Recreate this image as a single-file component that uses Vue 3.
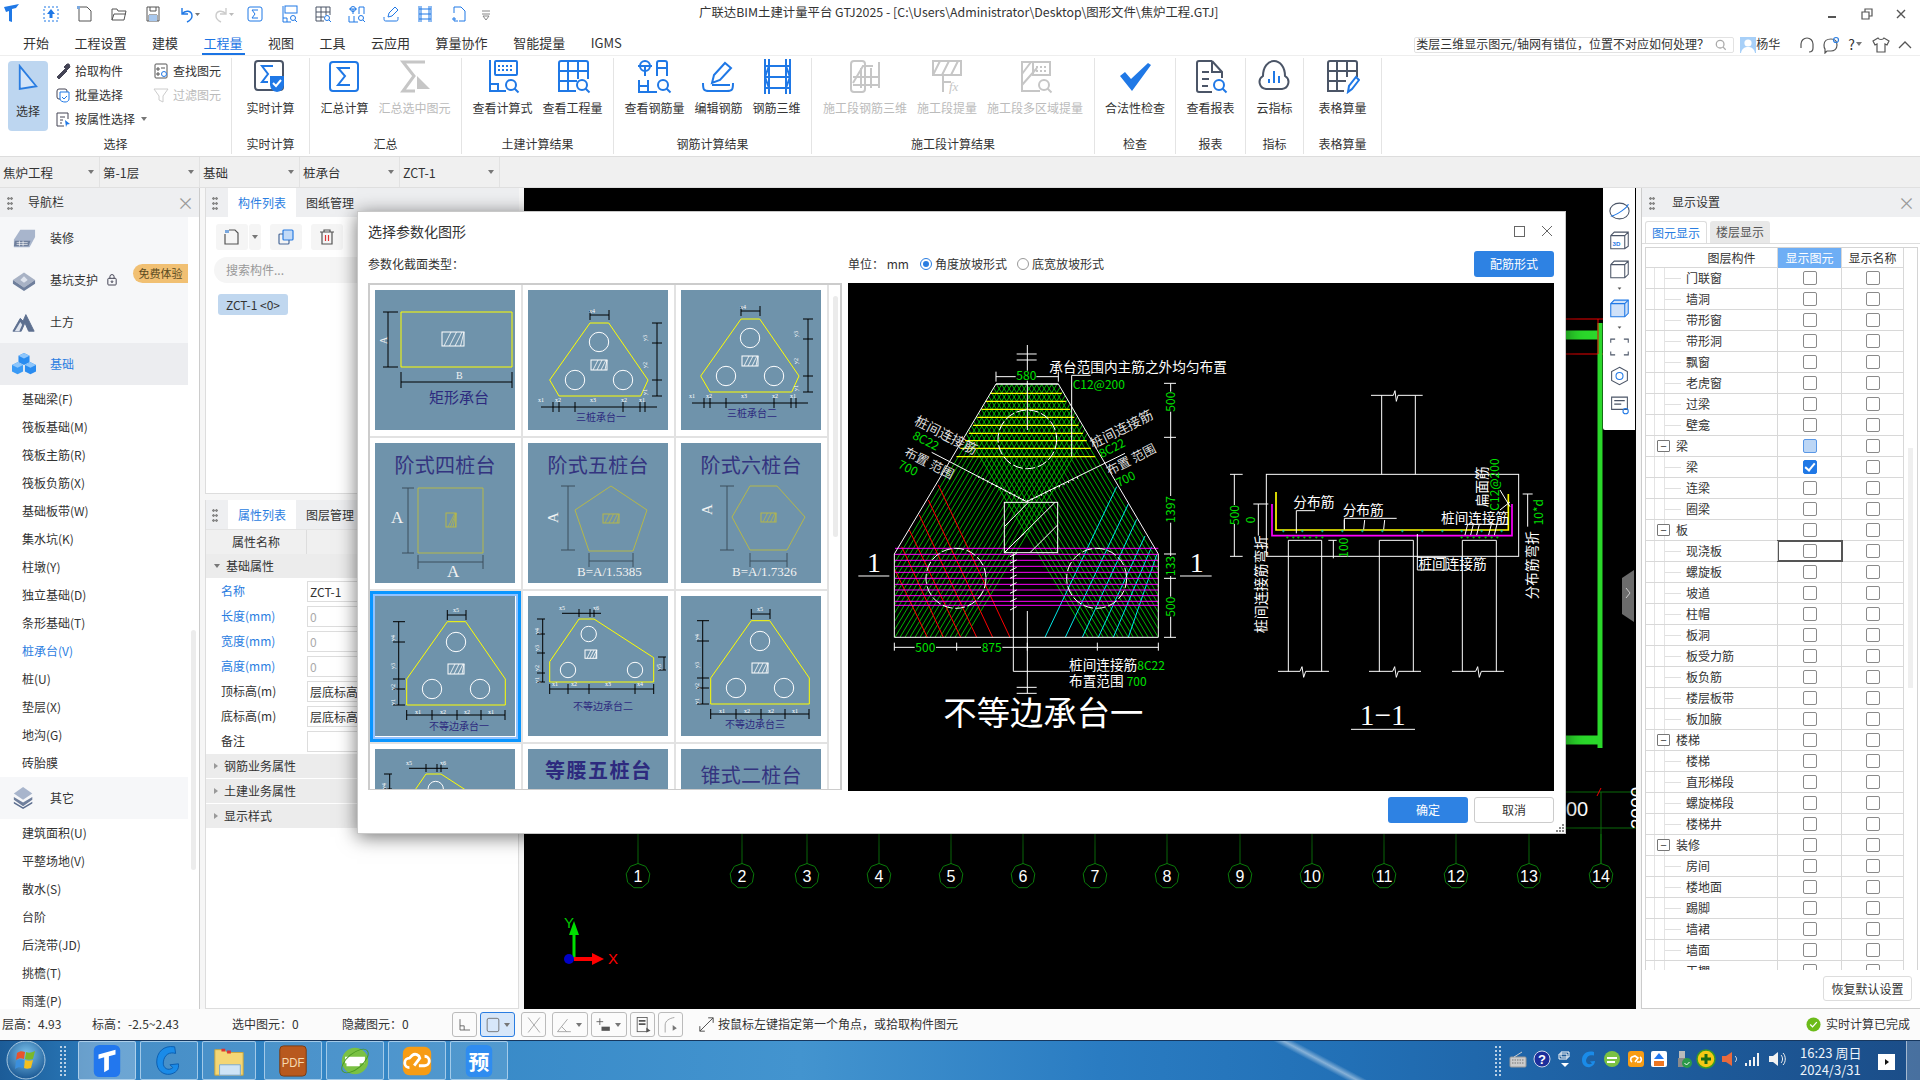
<template>
  <div class="app">
    <div class="titlebar">
      <svg class="logo" viewBox="0 0 20 20"><path d="M1 3l15-3-3 4-4 1v13l-3-1V7L3 8z" fill="#1f78e6"/></svg>
      <div class="quick">
        <svg v-for="q in quick" :key="q" viewBox="0 0 18 18" class="qk" v-html="qicons[q]"></svg>
      </div>
      <div class="apptitle">广联达BIM土建计量平台 GTJ2025 - [C:\Users\Administrator\Desktop\图形文件\焦炉工程.GTJ]</div>
      <div class="winbtns">
        <svg viewBox="0 0 12 12"><path d="M1 9h8" stroke="#555" stroke-width="2"/></svg>
        <svg viewBox="0 0 12 12" fill="none" stroke="#555" stroke-width="1.2"><path d="M1 4h7v7H1zM4 4V1h7v7H8"/></svg>
        <svg viewBox="0 0 12 12" stroke="#555" stroke-width="1.4"><path d="M2 2l8 8M10 2l-8 8"/></svg>
      </div>
    </div>

    <div class="menubar">
      <span v-for="m in menus" :key="m" class="menu" :class="{ on: m === '工程量' }">{{ m }}</span>
      <div class="menuright">
        <div class="helpsearch">
          <span class="helptext">类层三维显示图元/轴网有错位，位置不对应如何处理？</span>
          <svg viewBox="0 0 14 14" width="12" height="12" fill="none" stroke="#aaa" stroke-width="1.5"><circle cx="6" cy="6" r="4.5"/><path d="M9.5 9.5l3 3"/></svg>
        </div>
        <svg class="avatar" viewBox="0 0 16 16"><rect width="16" height="16" fill="#a8d0f8"/><circle cx="8" cy="6" r="3.6" fill="#fff"/><path d="M1 16c1-5 4-6 7-6s6 1 7 6z" fill="#fff"/></svg>
        <span class="uname">杨华</span>
        <svg class="hico" viewBox="0 0 18 18" fill="none" stroke="#555" stroke-width="1.2"><path d="M3 10V8a6 6 0 0 1 12 0v2M3 8v4M15 8v4c0 3-2 4-4 4"/></svg>
        <svg class="hico" viewBox="0 0 18 18" fill="none" stroke="#555" stroke-width="1.2"><path d="M2 9c0-4 3-6 7-6s6 2 6 6-3 6-6 6H5l-2 2v-4c-1-1-1-2-1-4z"/><circle cx="14" cy="4" r="2.5" stroke="#2a7de1"/></svg>
        <span class="qmark">?<i class="tri"></i></span>
        <svg class="hico shirt" viewBox="0 0 18 18" fill="none" stroke="#555" stroke-width="1.2"><path d="M6 2L1 5l2 4 2-1v8h8V8l2 1 2-4-5-3c-1 2-5 2-6 0z"/></svg>
        <svg class="hico" viewBox="0 0 18 18" fill="none" stroke="#555" stroke-width="1.3"><path d="M3 12l6-6 6 6"/></svg>
      </div>
    </div>

    <div class="ribbon">
      <div class="group selgrp">
        <div class="grouprow">
          <div class="selbtn">
            <svg viewBox="0 0 24 30" width="22" height="28"><path d="M3 2l18 22-18 3z" fill="#d4e5f8" stroke="#2a7de1" stroke-width="2"/></svg>
            <span>选择</span>
          </div>
          <div class="selcol">
            <div class="small"><svg viewBox="0 0 16 16" v-html="qicons.picker"></svg>拾取构件</div>
            <div class="small"><svg viewBox="0 0 16 16" v-html="qicons.batch"></svg>批量选择</div>
            <div class="small"><svg viewBox="0 0 16 16" v-html="qicons.attr"></svg>按属性选择<i class="tri"></i></div>
          </div>
          <div class="selcol second">
            <div class="small"><svg viewBox="0 0 16 16" v-html="qicons.find"></svg>查找图元</div>
            <div class="small off"><svg viewBox="0 0 16 16" v-html="qicons.filter"></svg>过滤图元</div>
          </div>
        </div>
        <div class="glabel">选择</div>
      </div>
      <div v-for="g in groups" :key="g.name" class="group" :style="{ width: g.w + 'px' }">
        <div class="grouprow btnrow">
          <div v-for="b in g.items" :key="b.t" class="rbtn" :class="{ off: b.off }">
            <svg viewBox="0 0 36 36" v-html="icons[b.i]"></svg>
            <span>{{ b.t }}</span>
          </div>
        </div>
        <div class="glabel">{{ g.name }}</div>
      </div>
    </div>

    <div class="combos">
      <div v-for="c in combos" :key="c" class="combo">{{ c }}<i class="tri"></i></div>
    </div>

    <div class="main">
      <div class="nav">
        <div class="phead"><i class="grip"></i><span>导航栏</span><em class="x">×</em></div>
        <div class="navlist">
          <div class="sec"><svg viewBox="0 0 26 24" v-html="navicons.deco"></svg><span>装修</span></div>
          <div class="sec"><svg viewBox="0 0 26 24" v-html="navicons.pit"></svg><span>基坑支护</span>
            <svg class="lock" viewBox="0 0 12 14" fill="none" stroke="#445" stroke-width="1.2"><rect x="1" y="5" width="10" height="8" rx="1"/><path d="M3.5 5V3a2.5 2.5 0 0 1 5 0v2"/><circle cx="6" cy="9" r="1"/></svg>
            <b class="free">免费体验</b></div>
          <div class="sec"><svg viewBox="0 0 26 24" v-html="navicons.earth"></svg><span>土方</span></div>
          <div class="sec act"><svg viewBox="0 0 26 24" v-html="navicons.base"></svg><span>基础</span></div>
          <div v-for="n in navBase" :key="n" class="sub" :class="{ cur: n === '桩承台(V)' }">{{ n }}</div>
          <div class="sec"><svg viewBox="0 0 26 24" v-html="navicons.other"></svg><span>其它</span></div>
          <div v-for="n in navOther" :key="n" class="sub">{{ n }}</div>
        </div>
        <i class="navscroll"></i>
      </div>

      <div class="middle">
        <div class="listpanel">
          <div class="phead tabs"><i class="grip"></i><span class="tab on">构件列表</span><span class="tab">图纸管理</span></div>
          <div class="listtools">
            <span class="tbtn"><svg viewBox="0 0 18 18" fill="none" stroke="#555" stroke-width="1.2" v-html="qicons.newdoc"></svg></span><span class="tbtn arrow"><i class="tri"></i></span>
            <span class="tbtn gap"><svg viewBox="0 0 18 18" fill="none" stroke="#4a6a9a" stroke-width="1.2"><rect x="6" y="2" width="10" height="10" rx="1" fill="#c2daf7" stroke="#2a7de1"/><path d="M6 6H3a1 1 0 0 0-1 1v8a1 1 0 0 0 1 1h8a1 1 0 0 0 1-1v-3"/></svg></span>
            <span class="tbtn gap"><svg viewBox="0 0 18 18" fill="none" stroke="#555" stroke-width="1.2"><path d="M2 4h14M6 4V2h6v2M4 4v12h10V4"/><path d="M7.5 7v6M10.5 7v6" stroke="#d33"/></svg></span>
          </div>
          <div class="searchbox">搜索构件...</div>
          <div class="listitem">ZCT-1 &lt;0&gt;</div>
        </div>
        <div class="attrpanel">
          <div class="phead tabs attrtabs"><i class="grip"></i><span class="tab on">属性列表</span><span class="tab">图层管理</span></div>
          <div class="attrhead"><span>属性名称</span></div>
          <div class="attrsec"><i class="tri"></i>基础属性</div>
          <div v-for="a in attrs" :key="a.k" class="attrrow">
            <span class="an" :class="{ blue: a.b }">{{ a.k }}</span>
            <span class="av" :class="{ grey: a.v === '0' }">{{ a.v }}</span>
          </div>
          <div v-for="s in attrSecs" :key="s" class="attrsec closed"><i class="tri side"></i>{{ s }}</div>
        </div>
      </div>

      <div class="canvas">
        <svg class="cadbg" viewBox="0 0 1112 821">
          <g v-for="b in bubbles" :key="b.n">
            <path :d="`M${b.x} 646V676`" stroke="#0a6a0a" stroke-width="1"/>
            <polygon :points="octagon(b.x, 688)" fill="none" stroke="#0a7a0a"/>
            <text :x="b.x" y="694" class="bub">{{ b.n }}</text>
          </g>
          <path d="M1042 604H1112M1042 640H1112M1077 604V676" stroke="#0a6a0a" fill="none"/>
          <path d="M1077 600l-4 8M1042 131H1079M1042 166H1079" stroke="#e00" fill="none"/>
          <path d="M1042 147H1074M1042 552H1076" stroke="#2bd82b" stroke-width="9" fill="none"/>
          <path d="M1076 135V560" stroke="#2bd82b" stroke-width="5"/>
          <path d="M1074 131V166" stroke="#e00"/>
          <text x="1042" y="628" class="big">00</text>
          <text transform="rotate(-90 1120 641)" x="1120" y="641" class="big sm">3000</text>
          <path d="M1098 390l12-8v52l-12-8z" fill="#6b6b6b"/>
          <path d="M1102 400l4 5-4 5" stroke="#ccc" fill="none"/>
          <path d="M50 771V742" stroke="#00e000" stroke-width="3"/>
          <path d="M50 733l-5 14h10z" fill="#00e000"/>
          <path d="M50 771H72" stroke="#f00" stroke-width="4"/>
          <path d="M80 771l-12-6v12z" fill="#f00"/>
          <circle cx="45" cy="771" r="5" fill="#0000c8"/>
          <text x="45" y="740" class="axis" fill="#00c800" text-anchor="middle">Y</text>
          <text x="84" y="776" class="axis" fill="#f00">X</text>
        </svg>
        <div class="vtools">
          <svg v-for="(v, i) in vtools" :key="i" :class="{ small: v === 'down' }" viewBox="0 0 24 24" v-html="vicons[v]"></svg>
        </div>
      </div>

      <div class="rightpanel">
        <div class="phead"><i class="grip"></i><span>显示设置</span><em class="x">×</em></div>
        <div class="rtabs"><span class="rtab on">图元显示</span><span class="rtab">楼层显示</span></div>
        <div class="rtable">
          <div class="rrow rhead"><span class="c1 ch">图层构件</span><span class="c2 hl">显示图元</span><span class="c3">显示名称</span></div>
          <div v-for="(r, i) in layers" :key="i" class="rrow">
            <span class="c1" :class="{ grp: r.g }">
              <i class="tree"></i>
              <b v-if="r.g" class="minus">−</b>
              <i v-else class="dash"></i>
              {{ r.t }}
            </span>
            <span class="c2" :class="{ picked: r.t === '现浇板' }"><i class="cb" :class="{ half: r.half, chk: r.chk }"></i></span>
            <span class="c3"><i class="cb"></i></span>
          </div>
          <i class="rscroll"></i>
        </div>
        <div class="rfoot"><span class="btn">恢复默认设置</span></div>
      </div>
    </div>

    <div class="status">
      <span class="st s1">层高：4.93</span>
      <span class="st s2">标高：-2.5~2.43</span>
      <span class="st s3">选中图元：0</span>
      <span class="st s4">隐藏图元：0</span>
      <div class="stools">
        <span v-for="(t, i) in stools" :key="i" class="stbtn" :class="t.c" :style="{ width: t.w + 'px', marginLeft: t.m + 'px' }">
          <svg viewBox="0 0 24 24" v-html="t.s"></svg><i v-if="t.a" class="tri"></i>
        </span>
      </div>
      <svg class="prompt" viewBox="0 0 18 18" fill="none" stroke="#444" stroke-width="1.1"><path d="M1 17L17 1M11 1h6v6M1 11v6h6"/></svg>
      <span class="prompttext">按鼠标左键指定第一个角点，或拾取构件图元</span>
      <div class="done">
        <svg viewBox="0 0 16 16" width="15" height="15"><circle cx="8" cy="8" r="7.5" fill="#6cbb1a"/><path d="M4.5 8l2.5 2.5 4.5-5" stroke="#fff" fill="none" stroke-width="1.4"/></svg>
        <span>实时计算已完成</span>
      </div>
    </div>

    <div class="taskbar">
      <svg class="orb" viewBox="0 0 40 40">
        <defs><radialGradient id="orbg" cx=".5" cy=".35" r=".7"><stop offset="0" stop-color="#7cc4ee"/><stop offset="1" stop-color="#134f8c"/></radialGradient></defs>
        <circle cx="20" cy="20" r="19" fill="url(#orbg)" stroke="#a9c8e0"/>
        <path d="M11 13c3-2 5-2 8-1l-1 7c-3-1-5-1-8 1z" fill="#e8532d"/><path d="M20 12c3 1 5 1 9-1l-2 8c-3 1-6 1-8 0z" fill="#7ab829"/>
        <path d="M10 21c3-2 5-2 8-1l-1 8c-3-1-5-1-8 1z" fill="#3b8fdc"/><path d="M19 20c3 1 5 1 8 0l-2 8c-3 1-5 1-7 0z" fill="#f4c020"/>
      </svg>
      <i class="tdots left"></i>
      <div class="tbtns">
        <span v-for="(t, i) in taskapps" :key="i" class="task" :class="{ first: i === 0, g3: i === 2 }" v-html="t"></span>
      </div>
      <i class="tdots right"></i>
      <div class="tray">
        <svg v-for="(t, i) in trayicons" :key="i" viewBox="0 0 20 20" v-html="t"></svg>
      </div>
      <div class="clock"><div>16:23 周日</div><div>2024/3/31</div></div>
      <span class="flag"><i></i></span>
      <span class="showdesk"></span>
    </div>

    <!-- 弹窗 -->
    <div class="dialog">
      <div class="dtitle">
        <span>选择参数化图形</span>
        <svg viewBox="0 0 40 14" width="40" height="14" fill="none" stroke="#666"><rect x="1.500" y="2.500" width="10" height="10" stroke-width="1"/><path d="M29 2l10 10M39 2L29 12" stroke-width="1"/></svg>
      </div>
      <div class="dtool">
        <span class="dlabel">参数化截面类型：</span>
        <span class="unit">单位：&nbsp;mm</span>
        <span class="radio on"></span><span class="rlabel">角度放坡形式</span>
        <span class="radio"></span><span class="rlabel">底宽放坡形式</span>
        <span class="pbtn small">配筋形式</span>
      </div>
      <div class="dbody">
        <div class="gridwrap">
          <div class="cells">
            <div v-for="(t, i) in thumbs" :key="i" class="cell" :class="{ sel: t.sel }">
              <svg class="thumb" viewBox="0 0 140 140">
                <text v-if="t.head" x="70" :y="t.hy" class="thead" :class="{ heavy: t.bold }" :textLength="t.bold ? 106 : 101">{{ t.head }}</text>
                <g :transform="`translate(${t.dx || 0} ${t.dy || 0})`">
                  <path v-if="t.dims" :d="t.dims" fill="none" :stroke="t.dimc || '#000'" stroke-width="1"/>
                  <polygon v-if="t.poly" :points="t.poly" fill="none" :stroke="t.yc || '#ffff00'" stroke-width="1"/>
                  <circle v-for="(c, j) in t.circles || []" :key="j" :cx="c[0]" :cy="c[1]" :r="c[2]" fill="none" stroke="#fff"/>
                  <g v-if="t.box">
                    <rect :x="t.box[0]" :y="t.box[1]" :width="t.box[2] - t.box[0]" :height="t.box[3] - t.box[1]" fill="none" :stroke="t.yc || '#fff'"/>
                    <path :d="hatch(t.box)" :stroke="t.yc || '#fff'" stroke-width=".8"/>
                  </g>
                  <text v-for="(l, j) in t.labels || []" :key="j" :x="l[0]" :y="l[1]" class="tiny" :transform="l[3] ? `rotate(-90 ${l[0]} ${l[1]})` : null">{{ l[2] }}</text>
                  <text v-if="t.name" :x="t.name[0]" :y="t.name[1]" :font-size="t.name[3] || 10" class="tname">{{ t.name[2] }}</text>
                  <text v-for="(l, j) in t.big || []" :key="j" :x="l[0]" :y="l[1]" :font-size="l[3] || 13" class="tbig" :transform="l[4] ? `rotate(-90 ${l[0]} ${l[1]})` : null">{{ l[2] }}</text>
                </g>
              </svg>
            </div>
          </div>
          <div class="gsb"><i></i></div>
        </div>
        <svg class="preview" viewBox="0 0 706 508">
          <!-- 平面图 -->
          <g transform="translate(2 -3) scale(.33333)" fill="none" stroke-width="3">
            <clipPath id="cap"><polygon points="438,312 625,312 925,822 925,1072 133,1072 133,822"/></clipPath>
            <g clip-path="url(#cap)">
              <path :d="greenA" stroke="#00d800" stroke-width="2.5"/>
              <path :d="greenB" stroke="#00d800" stroke-width="2.5"/>
            </g>
            <path :d="yellows" stroke="#ffff00" stroke-width="4"/>
            <path d="M265 615L480 1072M235 660L428 1072M208 705L380 1072M178 750L332 1072M155 800L280 1072M135 870L232 1072" stroke="#f00"/>
            <path d="M800 620L585 1072M835 672L646 1072M860 718L697 1072M885 768L745 1072M905 800L790 1072M920 825L835 1072" stroke="#00e8e8"/>
            <path :d="magentas" stroke="#f0f" stroke-width="3"/>
            <circle cx="532" cy="478" r="88" stroke="#fff" stroke-dasharray="30 8"/>
            <circle cx="318" cy="895" r="90" stroke="#fff" stroke-dasharray="30 8"/>
            <circle cx="740" cy="895" r="90" stroke="#fff" stroke-dasharray="30 8"/>
            <polygon points="438,312 625,312 925,822 925,1072 133,1072 133,822" stroke="#fff"/>
            <rect x="463" y="667" width="160" height="151" stroke="#fff"/>
            <path d="M463 740L535 667M463 818L615 667M540 818L623 735M490 790L523 760" stroke="#fff"/>
            <path d="M532 195V450M500 222H560M500 240H560M532 993V1240M500 1222H560M500 1240H560" stroke="#fff"/>
            <path d="M438 290H625M438 275V305M625 275V305M665 530V286H722M625 312H438" stroke="#fff"/>
            <path d="M962 310V1072M942 310H978M942 472H978M942 822H978M942 895H978M942 1072H978" stroke="#fff"/>
            <path d="M133 1102H925M133 1088V1112M320 1088V1112M532 1088V1112M742 1088V1112M925 1088V1112" stroke="#fff"/>
            <path d="M490 820V1174H660" stroke="#fff"/>
            <path d="M480 830L500 820M480 850L500 840M480 872L500 862M480 895L500 885M480 918L500 908M480 940L500 930M480 965L500 955M480 990L500 980" stroke="#fff"/>
            <path d="M245 517L530 665L825 520" stroke="#fff"/>
            <path d="M385 590L530 665L690 590" stroke="#fff" stroke-width="6" stroke-dasharray="3 12"/>
            <path d="M25 888H118M990 888H1085" stroke="#fff"/>
            <g class="cadtext" stroke="none">
              <rect x="497" y="272" width="62" height="30" fill="#000"/>
              <text x="499" y="300" font-size="36" fill="#00e000">580</text>
              <text x="598" y="275" font-size="41" fill="#fff">承台范围内主筋之外均匀布置</text>
              <text x="668" y="327" font-size="36" fill="#00e000">C12@200</text>
              <rect x="945" y="335" width="34" height="60" fill="#000"/>
              <rect x="945" y="648" width="34" height="80" fill="#000"/>
              <rect x="945" y="828" width="34" height="60" fill="#000"/>
              <rect x="945" y="950" width="34" height="60" fill="#000"/>
              <text x="975" y="365" font-size="36" fill="#00e000" text-anchor="middle" transform="rotate(-90 975 365)">500</text>
              <text x="975" y="688" font-size="36" fill="#00e000" text-anchor="middle" transform="rotate(-90 975 688)">1397</text>
              <text x="975" y="858" font-size="36" fill="#00e000" text-anchor="middle" transform="rotate(-90 975 858)">133</text>
              <text x="975" y="980" font-size="36" fill="#00e000" text-anchor="middle" transform="rotate(-90 975 980)">500</text>
              <rect x="194" y="1090" width="64" height="24" fill="#000"/>
              <rect x="393" y="1090" width="64" height="24" fill="#000"/>
              <text x="196" y="1115" font-size="36" fill="#00e000">500</text>
              <text x="395" y="1115" font-size="36" fill="#00e000">875</text>
              <text x="657" y="1170" font-size="41" fill="#fff">桩间连接筋<tspan fill="#00e000" font-size="36">8C22</tspan></text>
              <text x="657" y="1218" font-size="41" fill="#fff">布置范围 <tspan fill="#00e000" font-size="36">700</tspan></text>
              <text x="280" y="1335" font-size="100" fill="#fff">不等边承台一</text>
              <text x="72" y="875" font-size="84" fill="#fff" text-anchor="middle" class="serif">1</text>
              <text x="1040" y="875" font-size="84" fill="#fff" text-anchor="middle" class="serif">1</text>
              <text x="190" y="432" font-size="41" fill="#ddd" transform="rotate(27 190 432)">桩间连接筋</text>
              <text x="185" y="475" font-size="36" fill="#00e000" transform="rotate(27 185 475)">8C22</text>
              <text x="160" y="525" font-size="38" fill="#ddd" transform="rotate(27 160 525)">布置 范围</text>
              <text x="142" y="562" font-size="36" fill="#00e000" transform="rotate(27 142 562)">700</text>
              <text x="730" y="507" font-size="41" fill="#ddd" transform="rotate(-27 730 507)">桩间连接筋</text>
              <text x="755" y="535" font-size="36" fill="#00e000" transform="rotate(-27 755 535)">8C22</text>
              <text x="778" y="587" font-size="38" fill="#ddd" transform="rotate(-27 778 587)">布置 范围</text>
              <text x="806" y="622" font-size="36" fill="#00e000" transform="rotate(-27 806 622)">700</text>
            </g>
          </g>
          <!-- 1-1 剖面 -->
          <g transform="translate(352 97) scale(.33333)" fill="none" stroke-width="3">
            <rect x="199" y="283" width="757" height="246" stroke="#fff"/>
            <path d="M545 46V283M646 46V283M513 46H580l5 -14 4 32 5 -18H668" stroke="#fff"/>
            <path d="M265 875V481H365V875M538 875V481H640V875M787 875V481H889V875" stroke="#fff"/>
            <path d="M234 874H300l6 -14 5 32 6 -18H387M507 874H578l6 -14 5 32 6 -18H663M756 874H827l6 -14 5 32 6 -18H912" stroke="#fff"/>
            <path d="M228 336V450H925V342" stroke="#ffff00" stroke-width="5"/>
            <path d="M216 372V467H936V372" stroke="#f0f" stroke-width="5"/>
            <path :d="cyanDots" stroke="#00e8e8" stroke-width="2"/>
            <path :d="greenDots" stroke="#00e000" stroke-width="2"/>
            <path d="M103 283V529M90 283H128M90 529H128M175 372V467M160 372H205M400 481V535M385 481H410" stroke="#fff"/>
            <path d="M289 460V392H345M433 448V415H590M433 420v28M494 420l-3 28M554 420l-3 28M652 462V570H738V532H652" stroke="#fff"/>
            <path d="M795 465l8 -32M812 465l8 -32M830 465l8 -32M866 465l8 -32M883 465l8 -32M800 433H925M900 330l30 50M900 390l30 -24" stroke="#fff"/>
            <path d="M968 342H998M983 342V440" stroke="#fff"/>
            <path d="M453 1048H645" stroke="#fff"/>
            <g class="cadtext" stroke="none">
              <rect x="88" y="375" width="30" height="57" fill="#000"/>
              <text x="116" y="405" font-size="36" fill="#00e000" text-anchor="middle" transform="rotate(-90 116 405)">500</text>
              <text x="164" y="420" font-size="36" fill="#00e000" text-anchor="middle" transform="rotate(-90 164 420)">0</text>
              <text x="443" y="503" font-size="36" fill="#00e000" text-anchor="middle" transform="rotate(-90 443 503)">100</text>
              <text x="197" y="760" font-size="42" fill="#fff" transform="rotate(-90 197 760)">桩间连接筋弯折</text>
              <text x="280" y="380" font-size="41" fill="#fff">分布筋</text>
              <text x="428" y="405" font-size="41" fill="#fff">分布筋</text>
              <text x="723" y="428" font-size="41" fill="#fff">桩间连接筋</text>
              <text x="655" y="566" font-size="41" fill="#fff">桩间连接筋</text>
              <text x="860" y="382" font-size="41" fill="#fff" transform="rotate(-90 860 382)">扁面筋</text>
              <text x="898" y="392" font-size="36" fill="#00e000" transform="rotate(-90 898 392)">C12@200</text>
              <text x="1030" y="436" font-size="36" fill="#00e000" transform="rotate(-90 1030 436)">10*d</text>
              <text x="1012" y="658" font-size="41" fill="#fff" transform="rotate(-90 1012 658)">分布筋弯折</text>
              <text x="548" y="1035" font-size="88" fill="#fff" text-anchor="middle" class="serif">1−1</text>
            </g>
          </g>
        </svg>
      </div>
      <div class="dfoot">
        <span class="pbtn">确定</span>
        <span class="gbtn">取消</span>
      </div>
      <svg class="grip2" viewBox="0 0 8 8" fill="#888"><rect x="6" y="0" width="2" height="2"/><rect x="3" y="3" width="2" height="2"/><rect x="6" y="3" width="2" height="2"/><rect x="0" y="6" width="2" height="2"/><rect x="3" y="6" width="2" height="2"/><rect x="6" y="6" width="2" height="2"/></svg>
    </div>
  </div>
</template>

<script setup>
const B = '#1f78e6'
const D = '#4b5567'
const G = '#c6c6c6'
const s = (c, w = 2) => `fill="none" stroke="${c}" stroke-width="${w}"`

const mag = (c) => `<circle cx="27" cy="27" r="5" ${s(c)}/><path d="M30.5 30.5l4 4" ${s(c)}/>`

const icons = {
  rt: `<rect x="3" y="3" width="28" height="29" rx="3" ${s(D)}/><path d="M21 8H10l6 8-6 8h6" ${s(B)}/><path d="M18 18h14v9a8 8 0 0 1-7 7 8 8 0 0 1-7-7z" fill="${B}"/><path d="M21 25l3 3 5-6" ${s('#fff')}/>`,
  sum: `<rect x="4" y="4" width="28" height="29" rx="3" ${s(B)}/><path d="M24 10H12l7 8-7 9h12" ${s(B)}/>`,
  sumSel: `<path d="M28 4H6l11 14L6 33h12" ${s(G, 3)}/><path d="M20 18l13 13H20z" fill="${G}"/>`,
  calc: `<path d="M6 2v31h16M6 26h8v7" ${s(B)}/><rect x="11" y="3" width="22" height="14" rx="1" ${s(B)}/><path d="M14 8h16M14 12h16" stroke-dasharray="2 2" ${s(B)}/>${mag(B)}`,
  qty: `<path d="M21 33H4V5a2 2 0 0 1 2-2h25a2 2 0 0 1 2 2v16M4 13h29M4 23h18M13 3v30M23 3v18" ${s(B)}/>${mag(B)}`,
  rebar: `<circle cx="9" cy="8" r="5" ${s(B)}/><path d="M2 8h14M9 8v10M21 18V5a2 2 0 0 1 2-2h6a2 2 0 0 1 2 2v13M21 10h10M3 22v12h18M3 28h8M12 22v12" ${s(B)}/>${mag(B)}`,
  edit: `<path d="M3 25c0 7 1 8 6 8h18c5 0 6-1 6-8" ${s(B)}/><path d="M12 25l2-8L25 5l6 5-11 12z" ${s(B)}/><path d="M12 27h18" ${s(B)}/>`,
  r3d: `<path d="M6 1v35M10 1v35M27 1v35M31 1v35M6 8h25M6 19h25M6 30h25M10 8L6 19l4 11M27 8l4 11-4 11" ${s(B)}/>`,
  s3d: `<rect x="4" y="3" width="14" height="31" rx="3" ${s(G)}/><path d="M6 25L16 8h10M6 19h26M6 27h26M14 10v20M24 10v20M32 4v26" ${s(G)}/>`,
  sqty: `<path d="M4 3h28v14H4zM4 17l7-14M13 17l7-14M22 17l7-14M14 17v17M14 24h8" ${s(G)}/><text x="20" y="33" font-size="13" font-style="italic" font-family="Liberation Serif" fill="${G}">fx</text>`,
  smulti: `<path d="M24 4H5v29h18M5 16L14 4M5 27L20 10" ${s(G)}/><rect x="16" y="4" width="17" height="13" ${s(G)}/><path d="M19 9h11M19 13h11" stroke-dasharray="2 2" ${s(G)}/>${mag(G)}`,
  check: `<path d="M3 18l5-4 6 7L31 5l3 2-19 26z" fill="${B}"/>`,
  report: `<path d="M20 3H7a2 2 0 0 0-2 2v27a2 2 0 0 0 2 2h13M20 3l10 11v6M20 3v11h10" ${s(D)}/><path d="M10 14h7M10 21h7M10 28h6" ${s(D)}/>${mag(B)}`,
  cloud: `<path d="M10 31a7 7 0 0 1-3-13C7 9 12 3 18 3s11 6 11 15a7 7 0 0 1-3 13z" ${s(D)}/><path d="M13 25v-4M18 25V13M23 25v-7" ${s(B)}/>`,
  table: `<path d="M20 33H4V5a2 2 0 0 1 2-2h25a2 2 0 0 1 2 2v14M4 13h29M4 23h18M13 3v30M23 3v16" ${s(D)}/><path d="M24 34l1-6 7-9 3 3-7 9z" ${s(B)}/>`
}

const qicons = {
  up: `<path d="M2 2h14v14H2z" fill="none" stroke="${B}" stroke-dasharray="2 2"/><path d="M9 4l4 5h-2.500v4h-3V9H5z" fill="${B}"/>`,
  doc: `<path d="M3 2h8l4 4v10H3z" fill="none" stroke="#555"/><path d="M1 1h3v3H1z" fill="#7aa8de"/>`,
  folder: `<path d="M2 15V4h5l1 2h8l-2 9zM2 15l2-6h12" fill="none" stroke="#555"/>`,
  save: `<path d="M3 2h12v14H3zM6 2v4h6V2M5 16v-6h8v6" fill="none" stroke="#555"/><path d="M5 10h8v6H5z" fill="#a8c8ee"/>`,
  undo: `<path d="M4 3v6h6M4 9c3-4 10-4 10 2 0 3-3 5-5 6" fill="none" stroke="${B}" stroke-width="1.4"/><path d="M17 8h5l-2.500 3z" fill="#777"/>`,
  redo: `<path d="M14 3v6H8M14 9c-3-4-10-4-10 2 0 3 3 5 5 6" fill="none" stroke="#ccc" stroke-width="1.4"/><path d="M17 8h5l-2.500 3z" fill="#bbb"/>`,
  sum: `<rect x="2" y="2" width="14" height="14" rx="2" fill="none" stroke="${B}"/><path d="M12 5H6l3 4-3 4h6" fill="none" stroke="${B}"/>`,
  calc: `<path d="M3 1v16h8M3 13h4v4" fill="none" stroke="${B}"/><rect x="5" y="1" width="12" height="7" fill="none" stroke="${B}"/><circle cx="13" cy="13" r="2.500" fill="none" stroke="${B}"/><path d="M15 15l2 2" stroke="${B}"/>`,
  qty: `<path d="M10 16H2V2h14v8M2 7h14M2 12h8M7 2v14M12 2v8" fill="none" stroke="${D}"/><circle cx="13" cy="13" r="2.500" fill="none" stroke="${B}"/><path d="M15 15l2 2" stroke="${B}"/>`,
  rebar: `<circle cx="5" cy="4" r="2.500" fill="none" stroke="${B}"/><path d="M1 4h8M5 4v5M11 9V2h5v7M1 11v6h9M6 11v6" fill="none" stroke="${B}"/><circle cx="13" cy="13" r="2.500" fill="none" stroke="${B}"/><path d="M15 15l2 2" stroke="${B}"/>`,
  edit: `<path d="M2 12c0 4 0 4 3 4h8c3 0 3 0 3-4M6 12l1-4 6-6 3 3-6 6z" fill="none" stroke="${B}"/>`,
  r3d: `<path d="M3 1v16M5 1v16M13 1v16M15 1v16M3 4h12M3 9h12M3 14h12" fill="none" stroke="${B}"/>`,
  plus: `<path d="M4 8V2h7l4 4v10H9M4 12v4h4M2 14h4" fill="none" stroke="${B}"/>`,
  more: `<path d="M5 6h8M5 9h8M6 11l3 4 3-4z" fill="none" stroke="#888"/>`,
  picker: `<path d="M3 15l-1-1 8-8 2 2-8 8zM9 4l3 3 3-3-1-3-2 0z" fill="#445" stroke="#445"/>`,
  batch: `<rect x="2" y="2" width="10" height="10" rx="2" fill="none" stroke="#445"/><path d="M5 5h9v7c0 2-2 3-4 3s-5-1-5-3z" fill="#fff" stroke="${B}"/><path d="M7 10l2 2 3-3" fill="none" stroke="${B}"/>`,
  attr: `<path d="M2 2h11v6M2 2v13h7M5 6h5M5 9h3M5 12h2" fill="none" stroke="#445"/><path d="M10 9l5 4-3 .5-1 2.500z" fill="${B}"/>`,
  find: `<rect x="2" y="1" width="12" height="14" rx="1" fill="none" stroke="#555"/><path d="M4 5h2v2H4zM8 5h4M4 10h2v2H4z" fill="none" stroke="#555"/><circle cx="11" cy="11" r="2.500" fill="#fff" stroke="${B}"/>`,
  filter: `<path d="M1 2h14l-5 7v6l-4-2V9z" fill="none" stroke="#ccc"/>`,
  newdoc: `<path d="M2 6v10h13V5l-3-3H6"/><path d="M2 2h4v3H2z" fill="#7aa8de" stroke="none"/>`
}

const navicons = {
  deco: `<path d="M2 14L9 3h16v8l-6 11H2z" fill="#a8b5cc"/><path d="M3 15h17l-2 6H2z" fill="#6f7f9c"/><path d="M5 17h12M5 19h12M8 15v6M12 15v6" stroke="#fff" stroke-width=".7"/>`,
  pit: `<path d="M1 12l12-8 12 8-12 8z" fill="#a8b2c5"/><path d="M1 12v4l12 8 12-8v-4l-12 8z" fill="#6f7f9c"/><path d="M9 12l4-4 4 4-4 3z" fill="#dfe4ee"/>`,
  earth: `<path d="M1 22L9 8l3 3 3-7 9 18H18l-4-9-4 9z" fill="#5d7090" stroke="#5d7090"/><path d="M3 22l6-10 2 3-3 7z" fill="#dfe4ee"/>`,
  base: `<path d="M13 0l6 3v7l-6 3-6-3V3z" fill="#2a8cf0"/><path d="M6 10l6 3v7l-6 3-6-3v-7z" fill="#3a9af5"/><path d="M20 10l6 3v7l-6 3-6-3v-7z" fill="#2a8cf0"/><path d="M13 0l6 3-6 3-6-3zM6 10l6 3-6 3-6-3zM20 10l6 3-6 3-6-3z" fill="#8ec6fb"/>`,
  other: `<path d="M12 0l10 7-10 7L2 7z" fill="#a8b5cc"/><path d="M2 11l10 6 10-6v3L12 21 2 14z" fill="#6f7f9c"/><path d="M2 16l10 6 10-6v2l-10 6-10-6z" fill="#5d6f90"/>`
}

const vi = (c) => `fill="none" stroke="${c}" stroke-width="1.2"`
const vicons = {
  orbit: `<ellipse cx="12" cy="12" rx="11" ry="9" ${vi(D)}/><path d="M2 18C8 17 22 8 22 4" ${vi(B)}/>`,
  d3: `<path d="M2 7l4-4h16v16l-4 3H2zM2 7h16v15M18 7l4-4" ${vi(D)}/><text x="4" y="19" font-size="7" font-weight="700" font-family="Liberation Sans" fill="${B}">3D</text>`,
  cube: `<path d="M2 7l4-4h16v15l-4 4H2zM2 7h16v15M18 7l4-4" ${vi(D)}/>`,
  cubeb: `<path d="M2 7l4-4h16v15l-4 4H2z" fill="#cfe1f9" ${vi(B)}/><path d="M2 7h16v15M18 7l4-4" ${vi(B)}/>`,
  down: `<path d="M7 9h10l-5 6z" fill="#555"/>`,
  frame: `<path d="M2 7V3h5M17 3h5v4M22 17v4h-5M7 21H2v-4" ${vi(D)}/>`,
  eye: `<path d="M12 2l9 5v10l-9 5-9-5V7z" ${vi(D)}/><circle cx="12" cy="12" r="4" ${vi(B)}/>`,
  list: `<path d="M3 3h18v14H3zM6 7h12M6 11h8" ${vi(D)}/><circle cx="19" cy="19" r="3" ${vi(B)}/>`
}

const quick = ['up', 'doc', 'folder', 'save', 'undo', 'redo', 'sum', 'calc', 'qty', 'rebar', 'edit', 'r3d', 'plus', 'more']
const menus = ['开始', '工程设置', '建模', '工程量', '视图', '工具', '云应用', '算量协作', '智能提量', 'IGMS']

const groups = [
  { name: '实时计算', w: 78, items: [{ t: '实时计算', i: 'rt' }] },
  { name: '汇总', w: 152, items: [{ t: '汇总计算', i: 'sum' }, { t: '汇总选中图元', i: 'sumSel', off: true }] },
  { name: '土建计算结果', w: 152, items: [{ t: '查看计算式', i: 'calc' }, { t: '查看工程量', i: 'qty' }] },
  { name: '钢筋计算结果', w: 198, items: [{ t: '查看钢筋量', i: 'rebar' }, { t: '编辑钢筋', i: 'edit' }, { t: '钢筋三维', i: 'r3d' }] },
  { name: '施工段计算结果', w: 283, items: [{ t: '施工段钢筋三维', i: 's3d', off: true }, { t: '施工段提量', i: 'sqty', off: true }, { t: '施工段多区域提量', i: 'smulti', off: true }] },
  { name: '检查', w: 81, items: [{ t: '合法性检查', i: 'check' }] },
  { name: '报表', w: 70, items: [{ t: '查看报表', i: 'report' }] },
  { name: '指标', w: 58, items: [{ t: '云指标', i: 'cloud' }] },
  { name: '表格算量', w: 78, items: [{ t: '表格算量', i: 'table' }] }
]

const combos = ['焦炉工程', '第-1层', '基础', '桩承台', 'ZCT-1']
const navBase = ['基础梁(F)', '筏板基础(M)', '筏板主筋(R)', '筏板负筋(X)', '基础板带(W)', '集水坑(K)', '柱墩(Y)', '独立基础(D)', '条形基础(T)', '桩承台(V)', '桩(U)', '垫层(X)', '地沟(G)', '砖胎膜']
const navOther = ['建筑面积(U)', '平整场地(V)', '散水(S)', '台阶', '后浇带(JD)', '挑檐(T)', '雨蓬(P)']

const attrs = [
  { k: '名称', v: 'ZCT-1', b: true },
  { k: '长度(mm)', v: '0', b: true },
  { k: '宽度(mm)', v: '0', b: true },
  { k: '高度(mm)', v: '0', b: true },
  { k: '顶标高(m)', v: '层底标高' },
  { k: '底标高(m)', v: '层底标高' },
  { k: '备注', v: '' }
]
const attrSecs = ['钢筋业务属性', '土建业务属性', '显示样式']

const layers = [
  '门联窗', '墙洞', '带形窗', '带形洞', '飘窗', '老虎窗', '过梁', '壁龛', '#梁', '梁', '连梁', '圈梁',
  '#板', '现浇板', '螺旋板', '坡道', '柱帽', '板洞', '板受力筋', '板负筋', '楼层板带', '板加腋',
  '#楼梯', '楼梯', '直形梯段', '螺旋梯段', '楼梯井', '#装修', '房间', '楼地面', '踢脚', '墙裙', '墙面', '天棚'
].map((t, i) => ({
  t: t.replace('#', ''),
  g: t[0] === '#',
  half: t === '#梁',
  chk: i === 9
}))

const bx = [638, 742, 807, 879, 951, 1023, 1095, 1167, 1240, 1312, 1384, 1456, 1529, 1601]
const bubbles = bx.map((x, i) => ({ x: x - 524, n: i + 1 }))
const octagon = (x, y) => {
  const pts = []
  for (let i = 0; i < 9; i++) {
    const a = (Math.PI * 2 * i) / 9 - Math.PI / 2
    pts.push(`${(x + Math.cos(a) * 12).toFixed(1)},${(y + Math.sin(a) * 12.5).toFixed(1)}`)
  }
  return pts.join(' ')
}

const vtools = ['orbit', 'd3', 'cube', 'down', 'cubeb', 'down', 'frame', 'eye', 'list']

const stbtnSvg = {
  corner: '<path d="M6 5v13h12M6 13h5v5" fill="none" stroke="#555"/>',
  rect: `<rect x="5" y="4" width="14" height="16" rx="2" fill="none" stroke="#666"/>`,
  cross: '<path d="M5 3l14 18M19 3L5 21" fill="none" stroke="#999"/>',
  angle: '<path d="M3 20h16M3 20L15 5M8 14l6 6" fill="none" stroke="#999"/>',
  plusb: '<path d="M3 8h8M7 4v8" fill="none" stroke="#555"/><rect x="9" y="14" width="10" height="5" fill="#555"/>',
  phone: '<rect x="5" y="3" width="12" height="17" fill="none" stroke="#555"/><path d="M7 7h8M7 11h8" stroke="#555" stroke-width="2"/><path d="M16 15l5 4-5 2z" fill="#555"/>',
  curve: '<path d="M5 21V12c0-5 5-8 11-9" fill="none" stroke="#999"/><path d="M14 12l5 4-5 3z" fill="#777"/>'
}
const stools = [
  { s: stbtnSvg.corner, w: 25, m: 0 },
  { s: stbtnSvg.rect, w: 35, m: 3, a: true, c: 'act' },
  { s: stbtnSvg.cross, w: 25, m: 6 },
  { s: stbtnSvg.angle, w: 36, m: 6, a: true },
  { s: stbtnSvg.plusb, w: 36, m: 3, a: true },
  { s: stbtnSvg.phone, w: 25, m: 3 },
  { s: stbtnSvg.curve, w: 25, m: 3 }
]

const taskapps = [
  `<svg viewBox="0 0 36 36" width="34" height="34"><rect x="4" y="1" width="28" height="34" rx="6" fill="#2277ee"/><path d="M9 11l18-5v5l-7 2v14l-5 3V14l-6 2z" fill="#fff"/></svg>`,
  `<svg viewBox="0 0 36 36" width="34" height="34"><path d="M24 3C12 1 5 9 5 19c0 9 7 14 14 13 6-1 10-5 9-11l-9 1 3 3c-4 4-11 1-10-6 1-8 7-11 13-9z" fill="#1a8be8" stroke="#0b5cae"/></svg>`,
  `<svg viewBox="0 0 36 36" width="34" height="34"><path d="M3 6h10l3 3h17v24H3z" fill="#f4d675" stroke="#c9a53d"/><path d="M10 5h4v3h-4zM16 7h4v3h-4z" fill="#d33"/><path d="M8 22h22v11H8z" fill="#cfe4f6" stroke="#7aa8d0"/></svg>`,
  `<svg viewBox="0 0 36 36" width="34" height="34"><rect x="4" y="2" width="28" height="32" rx="4" fill="#b8591e" stroke="#7a3a10"/><text x="18" y="24" text-anchor="middle" font-size="14" fill="#f7d9b0" font-family="Liberation Sans" textLength="24" lengthAdjust="spacingAndGlyphs">PDF</text></svg>`,
  `<svg viewBox="0 0 36 36" width="34" height="34"><circle cx="18" cy="18" r="14" fill="#7ac143"/><path d="M9 15h18v4H9zM9 22h14" stroke="#fff" stroke-width="3" fill="#fff"/><ellipse cx="18" cy="18" rx="17" ry="8" fill="none" stroke="#4a9a24" transform="rotate(-40 18 18)"/></svg>`,
  `<svg viewBox="0 0 36 36" width="34" height="34"><rect x="3" y="3" width="30" height="30" rx="7" fill="#f79c14"/><path d="M10 25a5 5 0 0 1 0-10l3-3a5 5 0 0 1 8 3l-6 8M26 13a5 5 0 0 1 0 10h-6" fill="none" stroke="#fff" stroke-width="3"/></svg>`,
  `<svg viewBox="0 0 36 36" width="34" height="34"><rect x="4" y="1" width="28" height="34" rx="6" fill="#2f8cf0"/><text x="18" y="27" text-anchor="middle" font-size="22" font-family="Noto Sans CJK SC" font-weight="700" fill="#fff">预</text></svg>`
]

const trayicons = [
  '<rect x="2" y="8" width="16" height="10" rx="1" fill="#ccc" stroke="#999"/><path d="M4 11h12M4 14h12" stroke="#777" stroke-dasharray="1.500 1"/><path d="M6 8l8-5" stroke="#ccc"/>',
  '<circle cx="10" cy="10" r="8" fill="#1c2f9c" stroke="#cfd7e8"/><text x="10" y="15" text-anchor="middle" font-size="13" font-weight="700" fill="#fff" font-family="Liberation Sans">?</text>',
  '<path d="M6 3h8v5H6zM4 5h8v5H4z" fill="#1d5a96" stroke="#fff"/><path d="M6 14h8l-4 4z" fill="#fff"/>',
  '<path d="M15 3C7 1 3 6 3 11c0 5 4 8 8 7 3-1 5-3 5-6l-5 .5 2 2c-3 2-6 0-6-3 1-5 4-6 8-5z" fill="#1a8be8"/>',
  '<circle cx="10" cy="10" r="8" fill="#7ac143"/><path d="M5 9h10M5 13h8" stroke="#fff" stroke-width="2"/>',
  '<rect x="2" y="2" width="16" height="16" rx="3" fill="#f79c14"/><path d="M6 13a3 3 0 0 1 0-5l3-1 3 2-3 4M14 8a3 3 0 0 1 0 5h-3" fill="none" stroke="#fff" stroke-width="1.6"/>',
  '<rect x="2" y="2" width="16" height="16" rx="2" fill="#fff"/><path d="M10 4l5 6H5z" fill="#2277ee"/><rect x="5" y="12" width="10" height="5" fill="#ee7722"/>',
  '<rect x="6" y="2" width="6" height="9" fill="#bbb"/><rect x="5" y="9" width="8" height="9" fill="#8a8a8a"/><circle cx="14" cy="14" r="5" fill="#2a9a4a"/><path d="M11.500 14l2 2 3-3" stroke="#fff" fill="none"/>',
  '<circle cx="10" cy="10" r="9" fill="#f6c914" stroke="#3a9a24" stroke-width="1.500"/><path d="M10 5v10M5 10h10" stroke="#1a6a14" stroke-width="3"/>',
  '<path d="M2 7h4l6-4v14l-6-4H2z" fill="#e96a3d"/><path d="M15 7c2 2 2 4 0 6" fill="none" stroke="#e5e5e5"/>',
  '<path d="M2 17h2v-3H2zM6 17h2v-6H6zM10 17h2V8h-2zM14 17h2V4h-2z" fill="#f2f2f2"/>',
  '<path d="M2 7h4l5-4v14l-5-4H2z" fill="#f2f2f2"/><path d="M14 6c2 2 2 6 0 8M16 4c3 3 3 9 0 12" fill="none" stroke="#f2f2f2"/>'
]

// 参数化图形缩略图
const tri1Labels = [[13, 112, 'x1'], [30, 112, 'x2'], [65, 112, 'x3'], [96, 112, 'x2'], [114, 112, 'x1'], [64, 23, 'x4'], [119, 48, 'y3', 1], [119, 75, 'y2', 1], [119, 102, 'y1', 1]]
const tri1 = {
  poly: '62,33 80.700,33 120,90 112.700,106 31,106 21.700,90',
  circles: [[71, 52, 9.7], [47, 90, 9.7], [95, 90, 9.7]],
  box: [63, 70, 79, 80],
  dims: 'M13 117H129M25 112v10M31 112v10M47 112v10M95 112v10M112 112v10M117 112v10M129 33V106M124 33h10M124 53h10M124 90h10M124 106h10M62 25h19M62 20v10M81 20v10',
  labels: tri1Labels
}
const stepDim = 'M33 45V110M27 45h12M27 110h12'
const unequal1 = {
  poly: '72.300,25.700 90.700,25.700 130.300,83 130.300,109 31.700,109 31.700,83',
  circles: [[81, 46, 9.7], [57, 93, 9.7], [105, 93, 9.7]],
  box: [73, 68, 89, 78],
  dims: 'M23.700 25.700V109M18 25.700h12M18 46h12M18 83h12M18 93h12M18 109h12M31.700 119H130M31.700 114v10M57 114v10M82 114v10M106 114v10M130 114v10M72.300 19H91M72.300 14v10M91 14v10',
  labels: [[43, 118, 'x1'], [68, 118, 'x2'], [92, 118, 'x2'], [116, 118, 'x1'], [81, 16, 'x5'], [20, 42, 'y4', 1], [20, 70, 'y3', 1], [20, 91, 'y2', 1], [20, 106, 'y1', 1]]
}
const unequal2 = {
  poly: '51,23 66,23 125.700,61.700 125.700,86 21.700,86 21.700,65.700',
  circles: [[60.700, 38, 7.7], [40, 74, 7.7], [107, 74, 7.7]],
  box: [57, 54, 68.700, 62.300],
  dims: 'M21.700 93H125.700M21.700 88v10M40 88v10M61 88v10M107 88v10M125.700 88v10M14.700 23V86M9 23h8M9 38h8M9 57h8M9 77h8M9 86h8M34 17.300H73M51 13v8M62 13v8M66 13v8M136 61v13M130 61h8M130 74h8',
  labels: [[27, 90, 'x1'], [46, 90, 'x2'], [80, 90, 'x3'], [112, 90, 'x4'], [34, 14, 'x5'], [68, 14, 'x6'], [11, 35, 'y4', 1], [11, 52, 'y3', 1], [11, 72, 'y2', 1], [11, 84, 'y1', 1], [133, 71, 'y5', 1]]
}
const dull = '#b5b84a'
const darkDim = '#3c4f5c'
const thumbs = [
  {
    poly: '26,22 137,22 137,77 26,77',
    box: [67, 42, 89, 56],
    dims: 'M13 22V77M8 22h15M8 77h15M26 92H137M26 82v16M137 82v16',
    big: [[12, 54, 'A', 10, 1], [81, 89, 'B', 10]],
    name: [54, 113, '矩形承台', 15]
  },
  { ...tri1, name: [48, 131, '三桩承台一'] },
  { ...tri1, dx: -2, dy: -4, name: [48, 131, '三桩承台二'] },
  {
    head: '阶式四桩台', hy: 30, yc: dull, dimc: darkDim,
    poly: '43,45 108,45 108,110 43,110',
    box: [71, 70, 81, 84],
    dims: stepDim + 'M43 119H108M43 112v14M108 112v14',
    big: [[16, 80, 'A', 17], [72, 134, 'A', 17]]
  },
  {
    head: '阶式五桩台', hy: 30, yc: dull, dimc: darkDim,
    poly: '83,43 119,67 105,108 61,108 47,67',
    box: [75, 71, 91, 80],
    dims: 'M40 43V107M33 43h14M33 107h14M61 118H105M61 110v14M105 110v14',
    big: [[30, 80, 'A', 15, 1], [49, 133, 'B=A/1.5385', 13]]
  },
  {
    head: '阶式六桩台', hy: 30, yc: dull, dimc: darkDim,
    poly: '69,43 96,43 124,74 106,107 69,107 51,74',
    box: [80, 70, 95, 79],
    dims: 'M46 43V107M39 43h14M39 107h14M69 118H106M69 110v14M106 110v14',
    big: [[31, 72, 'A', 15, 1], [51, 133, 'B=A/1.7326', 13]]
  },
  { ...unequal1, sel: true, name: [54, 134, '不等边承台一'] },
  { ...unequal2, name: [45, 114, '不等边承台二'] },
  { ...unequal1, dx: -2, dy: -1, name: [46, 133, '不等边承台三'] },
  { ...unequal2, dy: 2 },
  { head: '等腰五桩台', hy: 29, bold: true },
  { head: '锥式二桩台', hy: 34 }
]

const hatch = (b) => {
  const [x1, y1, x2, y2] = b
  const h = y2 - y1
  let d = ''
  for (let x = x1 + 2; x < x2; x += (x2 - x1) / 4) {
    d += `M${x.toFixed(1)} ${y2}L${Math.min(x + h / 2, x2).toFixed(1)} ${y1}`
  }
  return d
}

// 图纸上的配筋线
let greenA = ''
let greenB = ''
for (let i = 0; i < 24; i++) {
  const bx0 = i * 15
  greenA += `M${bx0} 1072L${bx0 + 456} 312`
  const bx1 = 1060 - i * 15
  greenB += `M${bx1} 1072L${bx1 - 456} 312`
}
let yellows = ''
;[340, 364, 388, 412, 436, 460, 482, 505, 530].forEach((y) => {
  const off = (y - 340) * 0.53
  yellows += `M${420 - off} ${y}H${635 + off}`
})
let magentas = ''
;[805, 823, 841, 859, 877, 895, 913, 930, 947, 964, 976].forEach((y) => {
  magentas += `M135 ${y}H925`
})
const cross = (x, y, r) => `M${x - r} ${y}h${r * 2}M${x} ${y - r}v${r * 2}`
const cyanDots = [250, 307, 367, 427, 487, 547, 607, 667, 727, 785, 845, 905].map((x) => cross(x, 453, 4)).join('')
const greenDots = [262, 280, 295, 313, 330, 349, 367, 785, 803, 821, 838, 857, 875, 892].map((x) => cross(x, 472, 4)).join('')
</script>

<style>
html, body { margin: 0; padding: 0; background: #fff; overflow: hidden; }
</style>

<style scoped>
.app {
  position: relative;
  width: 1920px;
  height: 1080px;
  overflow: hidden;
  display: flex;
  flex-direction: column;
  background: #fff;
  color: #333;
  font: 12px/1.2 "Noto Sans CJK SC", "Noto Sans", sans-serif;
}
i, em, b { font-style: normal; font-weight: 400; }

.tri { display: inline-block; border: 3px solid transparent; border-top: 4px solid #777; border-bottom: 0; }
.tri.side { border: 3px solid transparent; border-left: 4px solid #999; border-right: 0; }

.titlebar { height: 28px; display: flex; align-items: center; flex: none; position: relative; }
.logo { width: 20px; height: 20px; margin-left: 3px; }
.quick { display: flex; margin-left: 19px; gap: 16px; }
.qk { width: 18px; height: 18px; overflow: visible; }
.qk:last-child { margin-left: -7px; }
.apptitle { position: absolute; left: 699px; top: 5px; font-size: 12.400px; white-space: nowrap; }
.winbtns { margin-left: auto; display: flex; gap: 20px; padding-right: 11px; }
.winbtns svg { width: 12px; height: 12px; display: block; margin-right: 2px; }

.menubar { height: 28px; flex: none; display: flex; align-items: center; padding-left: 23px; gap: 25.5px; border-bottom: 1px solid #eee; box-sizing: border-box; }
.menu { font-size: 13px; height: 27px; line-height: 30px; position: relative; }
.menu.on { color: #1b74e4; border-bottom: 2px solid #1b74e4; box-sizing: border-box; margin: 0 -2px; padding: 0 2px; }
.menuright { margin-left: auto; display: flex; align-items: center; margin-top: 6px; }
.helpsearch { width: 320px; height: 16px; border: 1px solid #e2e2e2; border-radius: 2px; display: flex; align-items: center; justify-content: space-between; padding-right: 6px; box-sizing: border-box; overflow: hidden; }
.helptext { white-space: nowrap; font-size: 12px; padding-left: 1px; }
.avatar { width: 16px; height: 16px; margin-left: 6px; }
.uname { margin-right: 18px; }
.hico { width: 18px; height: 18px; margin-right: 6px; }
.qmark { font-size: 14px; margin: 0 10px 0 2px; display: flex; align-items: center; gap: 1px; }
.shirt { margin-right: 6px; }

.ribbon { height: 100px; flex: none; display: flex; }
.group { position: relative; height: 96px; display: flex; flex-direction: column; box-sizing: border-box; border-right: 1px solid #e4e4e4; margin-top: 2px; }
.selgrp { width: 232px; }
.grouprow { height: 75px; display: flex; }
.btnrow { justify-content: center; gap: 10px; }
.glabel { text-align: center; line-height: 16px; margin-top: 3px; }
.rbtn { display: flex; flex-direction: column; align-items: center; white-space: nowrap; }
.rbtn svg { width: 36px; height: 36px; margin-top: 0; }
.rbtn span { margin-top: 6px; line-height: 16px; }
.rbtn.off span { color: #bbb; }
.selbtn { width: 40px; height: 70px; margin: 3px 0 0 8px; border-radius: 4px; background: #bdd6f0; display: flex; flex-direction: column; align-items: center; padding-top: 3px; box-sizing: border-box; gap: 12px; }
.selcol { margin-left: 7px; display: flex; flex-direction: column; padding-top: 5px; gap: 8px; }
.selcol.second { margin-left: 6px; }
.small { display: flex; align-items: center; height: 16px; white-space: nowrap; gap: 4px; }
.small svg { width: 16px; height: 16px; }
.small.off { color: #bbb; }
.small .tri { margin-left: 2px; }

.combos { height: 32px; flex: none; background: #f0f0f0; border-top: 1px solid #ddd; border-bottom: 1px solid #e0e0e0; box-sizing: border-box; display: flex; }
.combo { width: 100px; box-sizing: border-box; padding: 0 3px; border-right: 1px solid #e2e2e2; display: flex; align-items: center; justify-content: space-between; font-size: 12.500px; position: relative; padding-right: 5px; }

.main { height: 821px; flex: none; display: flex; background: #f6f6f6; }
.phead { height: 29px; background: #eeeff1; display: flex; align-items: center; box-sizing: border-box; position: relative; flex: none; }
.grip { width: 6px; height: 14px; margin: 0 0 0 7px; background: radial-gradient(circle, #888 1.200px, transparent 1.500px) 0 0 / 3px 5px; }
.phead span { margin-left: 15px; }
.x { margin-left: auto; margin-right: 5px; color: #999; font-size: 17px; line-height: 1; }

.nav { width: 200px; flex: none; background: #fff; border-right: 1px solid #ccc; box-sizing: border-box; position: relative; overflow: hidden; }
.navlist { width: 188px; }
.sec { height: 42px; background: #f6f7f9; display: flex; align-items: center; padding-left: 12px; position: relative; box-sizing: border-box; }
.sec svg { width: 24px; height: 24px; flex: none; }
.sec span { margin-left: 14px; }
.sec.act { background: #ecedf0; }
.sec.act span { color: #2a7de1; }
.lock { width: 10px !important; height: 12px !important; margin-left: 9px; }
.free { position: absolute; right: 0; top: 5px; width: 55px; height: 19px; border-radius: 10px 0 0 10px; background: #f1c073; font-size: 11px; line-height: 19px; text-align: center; color: #5a4a20; }
.sub { height: 28px; line-height: 28px; padding-left: 22px; }
.sub.cur { color: #2a7de1; }
.navscroll { position: absolute; left: 191px; top: 442px; width: 5px; height: 240px; background: #ececec; border-radius: 3px; }

.middle { width: 314px; margin: 0 5px; flex: none; display: flex; flex-direction: column; gap: 6px; }
.listpanel { height: 306px; background: #fff; border-left: 1px solid #ddd; border-bottom: 1px solid #ddd; box-sizing: border-box; flex: none; }
.attrpanel { flex: 1; background: #fff; border: 1px solid #ddd; border-width: 0 1px 1px; }
.tabs .grip { margin-left: 6px; }
.tabs .tab { margin: 0; width: 68px; height: 100%; text-align: center; line-height: 29px; }
.tabs .tab:first-of-type { margin-left: 10px; }
.tab.on { background: #fff; color: #2a7de1; }
.listtools { display: flex; padding: 7px 0 0 10px; height: 33px; box-sizing: border-box; }
.tbtn { width: 32px; height: 26px; background: #f5f5f5; border-radius: 3px; display: flex; align-items: center; justify-content: center; }
.tbtn svg { width: 18px; height: 18px; }
.tbtn.arrow { width: 12px; margin-left: 1px; }
.tbtn.gap { margin-left: 9px; }
.searchbox { margin: 7px 0 0 8px; height: 26px; background: #f5f5f5; border-radius: 13px 0 0 13px; line-height: 26px; padding-left: 12px; color: #999; }
.listitem { margin: 11px 0 0 12px; width: 70px; height: 21px; background: #c0d7ef; border-radius: 3px; line-height: 21px; text-align: center; box-sizing: border-box; white-space: nowrap; }
.attrtabs { height: 29px; }
.attrhead { height: 25px; background: #f0f0f0; border-top: 1px solid #e4e4e4; line-height: 24px; box-sizing: border-box; }
.attrhead span { display: inline-block; width: 101px; text-align: center; border-right: 1px solid #ddd; box-sizing: border-box; }
.attrsec { height: 24px; background: #ececec; display: flex; align-items: center; padding-left: 8px; gap: 6px; margin-bottom: 1px; }
.attrrow { height: 25px; display: flex; align-items: center; }
.an { width: 101px; padding-left: 15px; box-sizing: border-box; }
.an.blue { color: #2a7de1; }
.av { width: 210px; height: 21px; border: 1px solid #ddd; box-sizing: border-box; line-height: 19px; padding-left: 2px; }
.av.grey { color: #aaa; }

.canvas { width: 1112px; flex: none; background: #000; position: relative; overflow: hidden; }
.cadbg { width: 1112px; height: 821px; display: block; }
.bub { fill: #fff; font: 16px "Liberation Sans", sans-serif; text-anchor: middle; }
.big { fill: #fff; font: 20px "Liberation Sans", sans-serif; }
.big.sm { font-size: 19px; }
.axis { font: 15px "Liberation Sans", sans-serif; }
.vtools { position: absolute; right: 1px; top: 0; width: 32px; height: 242px; background: #fff; display: flex; flex-direction: column; align-items: center; padding-top: 12px; box-sizing: border-box; gap: 7px; border-radius: 0 0 0 2px; }
.vtools svg { width: 21px; height: 22px; flex: none; }
.vtools svg.small { height: 9px; margin: -3px 0; }

.rightpanel { width: 279px; margin-left: 5px; flex: none; background: #fff; border: 1px solid #ccc; border-width: 0 0 1px 1px; box-sizing: border-box; display: flex; flex-direction: column; height: 821px; }
.rightpanel .phead span { margin-left: 17px; }
.rtabs { display: flex; height: 27px; padding: 4px 0 0 3px; gap: 3px; border-bottom: 1px solid #ddd; box-sizing: border-box; flex: none; }
.rtab { width: 60px; text-align: center; line-height: 22px; background: #e8e8e8; color: #555; border-radius: 3px 3px 0 0; }
.rtab.on { background: #fff; color: #2a7de1; border: 1px solid #ddd; border-bottom: 0; width: 60px; }
.rtable { margin: 3px 2px 0 3px; height: 723px; overflow: hidden; border: 1px solid #d4d4d4; border-bottom: 0; border-top-width: 1px; box-sizing: border-box; position: relative; flex: none; }
.rrow { display: grid; grid-template-columns: 132px 64px 62px; height: 21px; box-sizing: border-box; border-bottom: 1px solid #d8d8d8; width: 258px; }
.rrow > span { display: flex; align-items: center; box-sizing: border-box; border-right: 1px solid #d8d8d8; height: 20px; }
.c2, .c3 { justify-content: center; }
.rhead { height: 20px; }
.ch { justify-content: center; padding-left: 0; }
.rhead .c2.hl { background: #6eaef5; color: #fff; }
.c1 { position: relative; padding-left: 40px; white-space: nowrap; }
.tree { position: absolute; left: 8px; top: 0; width: 11px; height: 20px; border-left: 1px solid #e4e4e4; border-right: 1px solid #e4e4e4; box-sizing: border-box; }
.dash { position: absolute; left: 19px; top: 10px; width: 16px; border-top: 1px solid #e0e0e0; }
.grp { padding-left: 30px; }
.minus { position: absolute; left: 11px; top: 4px; width: 13px; height: 12px; border: 1px solid #777; background: #fff; line-height: 10px; text-align: center; font-size: 11px; box-sizing: border-box; border-radius: 1px; }
.cb { width: 12px; height: 12px; border: 1px solid #8a8a8a; border-radius: 2px; display: block; position: relative; background: #fff; }
.cb.half { background: #bcd6f5; border-color: #5a97e5; }
.cb.chk { background: #1f78e6; border-color: #1f78e6; }
.cb.chk::after { content: ""; position: absolute; left: 3px; top: 0; width: 4px; height: 8px; border: solid #fff; border-width: 0 2px 2px 0; transform: rotate(40deg); }
.picked { outline: 2px solid #555; outline-offset: -1px; }
.rscroll { position: absolute; right: 4px; top: 200px; width: 5px; height: 240px; background: #efefef; }
.rfoot { display: flex; justify-content: flex-end; padding: 6px 8px 0 0; }
.btn { width: 89px; height: 25px; border: 1px solid #ddd; border-radius: 3px; line-height: 23px; text-align: center; box-sizing: border-box; }

.status { height: 31px; flex: none; background: #fbfbfb; display: flex; align-items: center; position: relative; }
.st { position: absolute; top: 8px; white-space: nowrap; }
.s1 { left: 2px; } .s2 { left: 92px; } .s3 { left: 232px; } .s4 { left: 342px; }
.stools { display: flex; margin-left: 452px; }
.stbtn { height: 25px; border: 1px solid #bbb; border-radius: 3px; display: flex; align-items: center; box-sizing: border-box; justify-content: flex-start; padding-left: 2px; gap: 1px; position: relative; }
.stbtn svg { width: 20px; height: 20px; }
.stbtn.act { background: #d7e7fa; border-color: #2a7de1; }
.prompt { width: 15px; height: 15px; margin-left: 16px; }
.prompttext { margin-left: 4px; white-space: nowrap; }
.done { margin-left: auto; margin-right: 10px; display: flex; align-items: center; gap: 5px; }

.taskbar { height: 40px; flex: none; position: relative; display: flex; align-items: stretch; overflow: hidden; border-top: 1px solid #17375e; box-sizing: border-box; background: linear-gradient(90deg, #1c5c98 0, #2d7fc0 110px, #4394cf 800px, #2a7cc2 1100px, #2270b6 1350px, #1e60a2 1600px, #1b4d88 1920px); }
.taskbar::before { content: ""; position: absolute; left: 1310px; top: 0; width: 22px; height: 40px; transform: skewX(62deg); background: linear-gradient(90deg, transparent, rgba(255,255,255,.45), transparent); }
.orb { width: 40px; height: 40px; margin: -1px 0 0 6px; flex: none; }
.tdots { width: 8px; height: 32px; margin: 4px 0 0 13px; flex: none; background: radial-gradient(circle, #b8d0e6 1px, transparent 1.300px) 0 0 / 4px 4px; }
.tbtns { display: flex; margin-left: 11px; gap: 4px; position: relative; }
.task { width: 58px; height: 39px; box-sizing: border-box; display: flex; align-items: center; justify-content: center; border: 1px solid rgba(200,225,245,.7); border-radius: 2px; background: rgba(255,255,255,.12); }
.task.first { background: rgba(255,255,255,.3); }
.task.g3 { width: 54px; margin-right: 4px; }
.tdots.right { margin-left: 986px; }
.tray { position: absolute; left: 1508px; top: 8px; display: flex; gap: 3.500px; }
.tray svg { width: 20px; height: 20px; }
.clock { position: absolute; left: 1800px; top: 3px; color: #eef4fb; font: 13px/17px "Noto Sans", sans-serif; white-space: nowrap; }
.clock div { font-family: "Noto Sans CJK SC", sans-serif; }
.flag { position: absolute; left: 1878px; top: 13px; width: 17px; height: 16px; background: #fff; }
.flag i { position: absolute; left: 7px; top: 5px; border: 3px solid transparent; border-left: 4px solid #111; border-right: 0; }
.showdesk { position: absolute; right: 0; top: 0; width: 13px; height: 40px; background: rgba(255,255,255,.2); border-left: 1px solid rgba(255,255,255,.5); }

.dialog { position: absolute; left: 357px; top: 211px; width: 1209px; height: 623px; background: #fff; border: 1px solid #c8c8c8; box-sizing: border-box; box-shadow: 0 3px 18px rgba(0,0,0,.55); padding: 0 11px 0 10px; }
.dtitle { height: 38px; display: flex; align-items: center; justify-content: space-between; font-size: 14px; padding-right: 1px; margin-top: 0; }
.dtool { height: 26px; display: flex; align-items: center; margin-top: 1px; margin-bottom: 6px; }
.dlabel { width: 480px; flex: none; }
.unit { width: 72px; flex: none; }
.radio { width: 12px; height: 12px; border-radius: 50%; border: 1px solid #999; box-sizing: border-box; flex: none; position: relative; background: #fff; }
.radio.on::after { content: ""; position: absolute; left: 2px; top: 2px; width: 6px; height: 6px; border-radius: 50%; background: #2a7de1; }
.radio.on { border-color: #2a7de1; }
.rlabel { margin: 0 10px 0 3px; width: 72px; flex: none; }
.pbtn { width: 80px; height: 26px; background: #2e82e3; color: #fff; border-radius: 3px; text-align: center; line-height: 26px; display: inline-block; }
.pbtn.small { margin-left: auto; }
.dbody { display: flex; gap: 6px; height: 508px; }
.gridwrap { width: 474px; height: 507px; border: 2px solid #ccc; border-bottom-width: 1px; box-sizing: border-box; display: flex; overflow: hidden; }
.cells { width: 459px; display: grid; grid-template-columns: repeat(3, 153px); grid-auto-rows: 153px; flex: none; }
.cell { box-sizing: border-box; padding: 5px 0 0 5px; border-right: 2px solid #e2e2e2; border-bottom: 2px solid #e2e2e2; }
.cell.sel { box-shadow: inset 0 0 0 3px #0a96ff, inset 0 0 0 5px #90c2ff; }
.thumb { width: 140px; height: 140px; display: block; background: #6f93ab; }
.thead { fill: #34347f; font: 20px "Noto Sans CJK SC", sans-serif; text-anchor: middle; }
.thead.heavy { font-weight: 700; fill: #2d2a7e; }
.tiny { fill: #fff; font: 6px "Liberation Serif", serif; text-anchor: middle; }
.tname { fill: #2d2a7e; font-family: "Noto Sans CJK SC", sans-serif; }
.tbig { fill: #f2f2f2; font-family: "Liberation Serif", serif; }
.gsb { flex: 1; position: relative; }
.gsb i { position: absolute; left: 4px; top: 11px; width: 5px; height: 241px; background: #ebebeb; border-radius: 3px; }
.preview { width: 706px; height: 508px; background: #000; display: block; flex: none; }
.cadtext text { font-family: "Noto Sans CJK SC", "Liberation Sans", sans-serif; }
.cadtext .serif { font-family: "Liberation Serif", serif; }
.dfoot { display: flex; justify-content: flex-end; gap: 6px; margin-top: 6px; }
.gbtn { width: 80px; height: 26px; border: 1px solid #ccc; border-radius: 3px; box-sizing: border-box; text-align: center; line-height: 24px; }
.grip2 { position: absolute; right: 1px; bottom: 1px; width: 8px; height: 8px; }
</style>
